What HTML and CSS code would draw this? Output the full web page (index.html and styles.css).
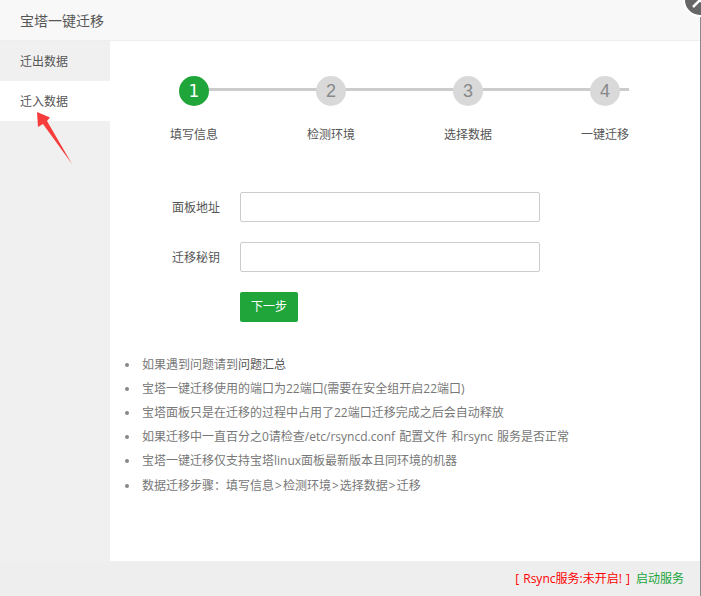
FILE: index.html
```html
<!DOCTYPE html>
<html lang="zh-CN">
<head>
	<meta charset="UTF-8">
	<title>宝塔一键迁移</title>
	<link rel="stylesheet" href="styles.css">
</head>
<body>
	<div class="layer">
		<div class="layer-title">宝塔一键迁移</div>
		<div class="layer-main">
			<ul class="side-tab">
				<li class="tab-item">迁出数据</li>
				<li class="tab-item active">迁入数据</li>
			</ul>
			<div class="content">
				<ul class="steps">
					<li class="step-item active"><span class="step-num">1</span><span class="step-txt">填写信息</span></li>
					<li class="step-item"><span class="step-num">2</span><span class="step-txt">检测环境</span></li>
					<li class="step-item"><span class="step-num">3</span><span class="step-txt">选择数据</span></li>
					<li class="step-item"><span class="step-num">4</span><span class="step-txt">一键迁移</span></li>
				</ul>
				<div class="form">
					<div class="form-line">
						<label class="form-label">面板地址</label>
						<input class="form-input" type="text">
					</div>
					<div class="form-line">
						<label class="form-label">迁移秘钥</label>
						<input class="form-input" type="text">
					</div>
					<div class="form-line">
						<span class="form-label"></span>
						<a href="javascript:;" class="btn-next">下一步</a>
					</div>
				</div>
				<ul class="help">
					<li>如果遇到问题请到<a href="javascript:;">问题汇总</a></li>
					<li>宝塔一键迁移使用的端口为22端口(需要在安全组开启22端口)</li>
					<li>宝塔面板只是在迁移的过程中占用了22端口迁移完成之后会自动释放</li>
					<li>如果迁移中一直百分之0请检查/etc/rsyncd.conf 配置文件 和rsync 服务是否正常</li>
					<li>宝塔一键迁移仅支持宝塔linux面板最新版本且同环境的机器</li>
					<li>数据迁移步骤<span class="colon">：</span>填写信息<span class="gt">&gt;</span>检测环境<span class="gt">&gt;</span>选择数据<span class="gt">&gt;</span>迁移</li>
				</ul>
			</div>
		</div>
		<div class="layer-foot">
			<span class="rsync-off">[ Rsync服务:未开启! ]</span>
			<a href="javascript:;" class="rsync-start">启动服务</a>
		</div>
	</div>
	<a href="javascript:;" class="layer-close">
		<svg width="30" height="30" viewBox="0 0 30 30"><path d="M8 8 L22 22 M22 8 L8 22" stroke="#fff" stroke-width="2.5" fill="none"/></svg>
	</a>
	<svg class="mark-arrow" width="50" height="60" viewBox="0 0 50 60">
		<polygon points="7,2 20,7.500 17,11 42,54 13,14 8,17" fill="#f73c3c"/>
	</svg>
</body>
</html>
```

FILE: styles.css
```css
*{
	margin: 0;
	padding: 0;
	box-sizing: border-box;
}
ul{
	list-style: none;
}
a{
	text-decoration: none;
}
html,body{
	height: 100%;
	overflow: hidden;
}
body{
	position: relative;
	background-color: #fff;
	font-family: "Open Sans", "Noto Sans CJK SC", sans-serif;
	font-size: 12px;
	color: #555;
}
.layer{
	display: flex;
	flex-direction: column;
	width: 701px;
	height: 596px;
	border-right: 1px solid #8a8a8a;
}
.layer-title{
	height: 41px;
	padding-left: 20px;
	line-height: 41px;
	font-size: 14px;
	color: #555;
	background-color: #f8f8f8;
	border-bottom: 1px solid #eee;
}
.layer-main{
	display: flex;
	flex: 1;
}
.side-tab{
	width: 110px;
	background-color: #f0f0f0;
}
.tab-item{
	height: 40px;
	padding-left: 20px;
	line-height: 41px;
	color: #555;
}
.tab-item.active{
	background-color: #fff;
}
.content{
	flex: 1;
	padding-top: 35px;
}
.steps{
	position: relative;
	display: flex;
	width: 459px;
	margin-left: 61px;
}
.steps::before{
	content: "";
	position: absolute;
	left: 23px;
	top: 12px;
	width: 435px;
	height: 3px;
	background-color: #ccc;
}
.step-item{
	position: relative;
	display: flex;
	flex-direction: column;
	align-items: center;
	flex: none;
	width: 46px;
	margin-right: 91px;
}
.step-item:last-child{
	margin-right: 0;
}
.step-num{
	width: 30px;
	height: 30px;
	line-height: 30px;
	text-align: center;
	font-family: "Liberation Sans", sans-serif;
	font-size: 18px;
	border-radius: 50%;
	color: #888;
	background-color: #d9d9d9;
}
.step-txt{
	margin-top: 20px;
	line-height: 18px;
	white-space: nowrap;
	color: #555;
}
.step-item.active .step-num{
	color: #fff;
	font-family: "DejaVu Sans", sans-serif;
	font-size: 17px;
	background-color: #20a53a;
}
.form{
	margin-top: 48px;
}
.form-line{
	display: flex;
	align-items: center;
	margin-bottom: 20px;
}
.form-label{
	width: 130px;
	padding-right: 20px;
	text-align: right;
	color: #555;
}
.form-input{
	width: 300px;
	height: 30px;
	border: 1px solid #ccc;
	border-radius: 2px;
	background-color: #fff;
}
.btn-next{
	width: 58px;
	height: 30px;
	line-height: 30px;
	text-align: center;
	color: #fff;
	border-radius: 2px;
	background-color: #20a53a;
}
.help{
	margin-top: 31px;
	padding-left: 32px;
	color: #777;
	word-spacing: 1px;
}
.help li{
	line-height: 24px;
}
/* 圆点 */
.help li::before{
	content: "";
	display: inline-block;
	width: 4px;
	height: 4px;
	margin: 0 13px 1px -17px;
	vertical-align: middle;
	border-radius: 50%;
	background-color: #888;
}
.help a{
	color: #555;
}
.help .colon{
	font-family: "Noto Sans CJK TC", sans-serif;
}
.help .gt{
	margin: 0 1px;
}
.layer-foot{
	height: 35px;
	padding-right: 16px;
	line-height: 36px;
	text-align: right;
	background-color: #eee;
}
.rsync-off{
	color: #ff0000;
	word-spacing: 1px;
}
.rsync-start{
	margin-left: 3px;
	color: #20a53a;
}
.layer-close{
	position: absolute;
	left: 685px;
	top: -15px;
	width: 30px;
	height: 30px;
	border-radius: 50%;
	background-color: #666;
	box-shadow: 0 0 0 2px #fff;
}
.mark-arrow{
	position: absolute;
	left: 30px;
	top: 110px;
}
```
